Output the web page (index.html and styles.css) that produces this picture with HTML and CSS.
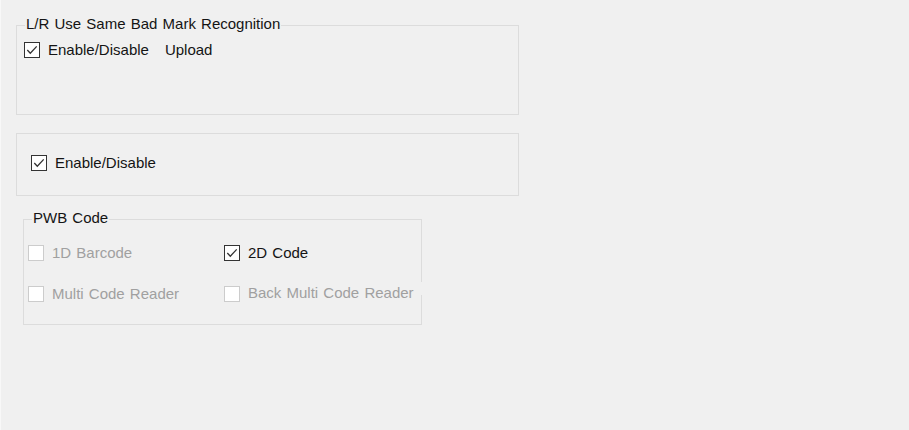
FILE: index.html
```html
<!DOCTYPE html>
<html lang="en">
<head>
<meta charset="utf-8">
<title>Settings</title>
<link rel="stylesheet" href="styles.css">
</head>
<body>
<div class="page">
  <div class="group group-lr">
    <div class="group-title">L/R Use Same Bad Mark Recognition</div>
    <div class="row row-lr">
      <label class="check">
        <span class="box checked"><svg viewBox="0 0 16 16" width="16" height="16"><path d="M3.3 8 L6.3 11.2 L12.7 4.4" /></svg></span>
        <span class="text">Enable/Disable</span>
      </label>
      <span class="plain upload">Upload</span>
    </div>
  </div>

  <div class="group group-en">
    <div class="row row-en">
      <label class="check">
        <span class="box checked"><svg viewBox="0 0 16 16" width="16" height="16"><path d="M3.3 8 L6.3 11.2 L12.7 4.4" /></svg></span>
        <span class="text">Enable/Disable</span>
      </label>
    </div>
  </div>

  <div class="group group-pwb">
    <div class="group-title">PWB Code</div>
    <div class="grid">
      <label class="check disabled">
        <span class="box"></span>
        <span class="text">1D Barcode</span>
      </label>
      <label class="check">
        <span class="box checked"><svg viewBox="0 0 16 16" width="16" height="16"><path d="M3.3 8 L6.3 11.2 L12.7 4.4" /></svg></span>
        <span class="text">2D Code</span>
      </label>
      <label class="check disabled">
        <span class="box"></span>
        <span class="text">Multi Code Reader</span>
      </label>
      <label class="check disabled">
        <span class="box"></span>
        <span class="text text-over">Back Multi Code Reader</span>
      </label>
    </div>
  </div>
</div>
</body>
</html>
```

FILE: styles.css
```css
html, body {
  margin: 0;
  padding: 0;
}

body {
  background: #f0f0f0;
  width: 909px;
  height: 430px;
  overflow: hidden;
  border-left: 1px solid #f8f8f8;
  box-sizing: border-box;
  font-family: "Liberation Sans", Arial, sans-serif;
  font-size: 15px;
  word-spacing: 1px;
  color: #141414;
}

.page {
  display: flex;
  flex-direction: column;
  align-items: flex-start;
  padding-left: 15px;
  padding-top: 25px;
}

.group {
  box-sizing: border-box;
  border: 1px solid #dcdcdc;
  display: flex;
  flex-direction: column;
  align-items: flex-start;
}

.group-title {
  margin: -11px 0 0 8px;
  padding: 0 1px;
  line-height: 18px;
  height: 18px;
  background: #f0f0f0;
  white-space: nowrap;
}

.group-lr {
  width: 503px;
  height: 90px;
}

.group-en {
  width: 503px;
  height: 63px;
  margin-top: 18px;
}

.group-pwb {
  width: 399px;
  height: 106px;
  margin-top: 23px;
  margin-left: 7px;
}

.row {
  display: flex;
  align-items: center;
  height: 18px;
}

.row-lr {
  margin-top: 8px;
  padding-left: 7px;
}

.row-en {
  margin-top: 20px;
  padding-left: 14px;
}

.upload {
  margin-left: 16px;
  line-height: 18px;
}

.grid {
  display: grid;
  grid-template-columns: 196px auto;
  grid-auto-rows: 18px;
  row-gap: 23px;
  margin-top: 17px;
  padding-left: 4px;
}

.check {
  display: flex;
  align-items: center;
  height: 18px;
  white-space: nowrap;
}

.check .text {
  margin-left: 8px;
  line-height: 18px;
}

.box {
  box-sizing: border-box;
  width: 16px;
  height: 16px;
  border: 1px solid #333333;
  background: #ffffff;
  display: flex;
  align-items: center;
  justify-content: center;
  flex: none;
}

.box svg {
  display: block;
  margin: -1px;
}

.box path {
  fill: none;
  stroke: #333333;
  stroke-width: 1.3;
}

.disabled .box {
  border-color: #cccccc;
}

.disabled .text {
  color: #a0a0a0;
}

.check .text-over {
  align-self: flex-start;
  margin-top: -3px;
  height: 13px;
  line-height: 22px;
  padding-right: 16px;
  background: #f0f0f0;
}
```
